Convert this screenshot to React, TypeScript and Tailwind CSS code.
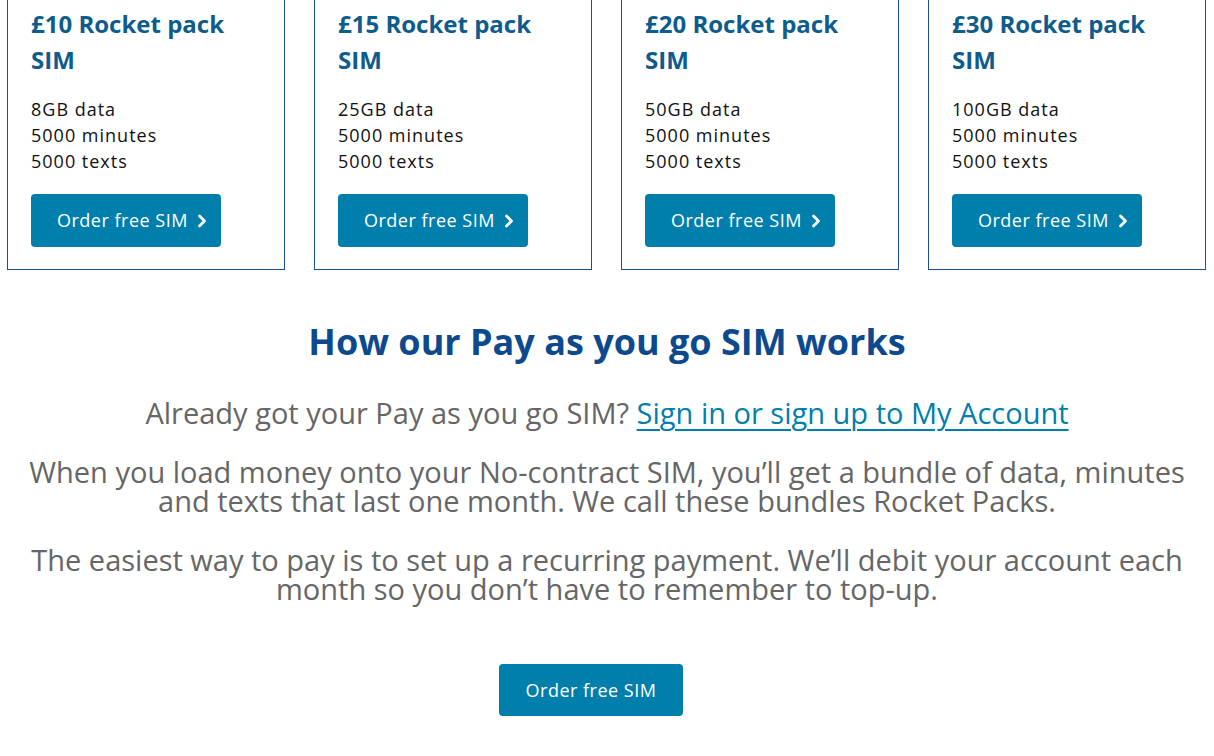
import React from "react";

const cards = [
  { price: "£10", data: "8GB" },
  { price: "£15", data: "25GB" },
  { price: "£20", data: "50GB" },
  { price: "£30", data: "100GB" },
];

function Chevron() {
  return (
    <svg width="10" height="14" viewBox="0 0 10 14" fill="none" className="ml-[9px]">
      <path d="M2.5 2 L7.5 7 L2.5 12" stroke="white" strokeWidth="2.8" strokeLinecap="round" strokeLinejoin="round" />
    </svg>
  );
}

export default function App() {
  return (
    <div className="w-[1214px] h-[756px] overflow-hidden bg-white" style={{ fontFamily: "'Open Sans', 'Noto Sans', sans-serif" }}>
      <div className="grid grid-cols-4 gap-[29px] pl-[7px] pr-[8px] -mt-[20px]">
        {cards.map((c) => (
          <div key={c.price} className="border border-[#1b4f8e] pt-[25px] pb-[22px] pl-[23px]">
            <h3 className="text-[24px] leading-[36px] font-bold text-[#0e5c8c]">
              {c.price} Rocket pack
              <br />
              SIM
            </h3>
            <ul className="mt-[18px] text-[18px] leading-[26px] tracking-[1px] text-[#111]">
              <li>{c.data} data</li>
              <li>5000 minutes</li>
              <li>5000 texts</li>
            </ul>
            <button className="mt-[20px] h-[53px] w-[190px] rounded-[4px] bg-[#007fad] text-white text-[18px] tracking-[0.5px] flex items-center pl-[26px]">
              Order free SIM
              <Chevron />
            </button>
          </div>
        ))}
      </div>

      <div className="flex flex-col items-center text-center px-2">
        <h2 className="mt-[50px] text-[36px] leading-[44px] font-bold text-[#0c4a8d]">How our Pay as you go SIM works</h2>
        <p className="mt-[33px] text-[29px] leading-[32px] text-[#666]">
          Already got your Pay as you go SIM?{" "}
          <a href="#" className="text-[#007fad] underline underline-offset-[5px] decoration-[2px]">
            Sign in or sign up to My Account
          </a>
        </p>
        <p className="mt-[28px] text-[29px] leading-[29px] text-[#666] whitespace-nowrap">
          When you load money onto your No-contract SIM, you’ll get a bundle of data, minutes
          <br />
          and texts that last one month. We call these bundles Rocket Packs.
        </p>
        <p className="mt-[30px] text-[29px] leading-[29px] text-[#666] whitespace-nowrap">
          The easiest way to pay is to set up a recurring payment. We’ll debit your account each
          <br />
          month so you don’t have to remember to top-up.
        </p>
        <button className="mt-[61px] mr-[32px] h-[52px] w-[184px] rounded-[4px] bg-[#007fad] text-white text-[18px] tracking-[0.5px]">
          Order free SIM
        </button>
      </div>
    </div>
  );
}
